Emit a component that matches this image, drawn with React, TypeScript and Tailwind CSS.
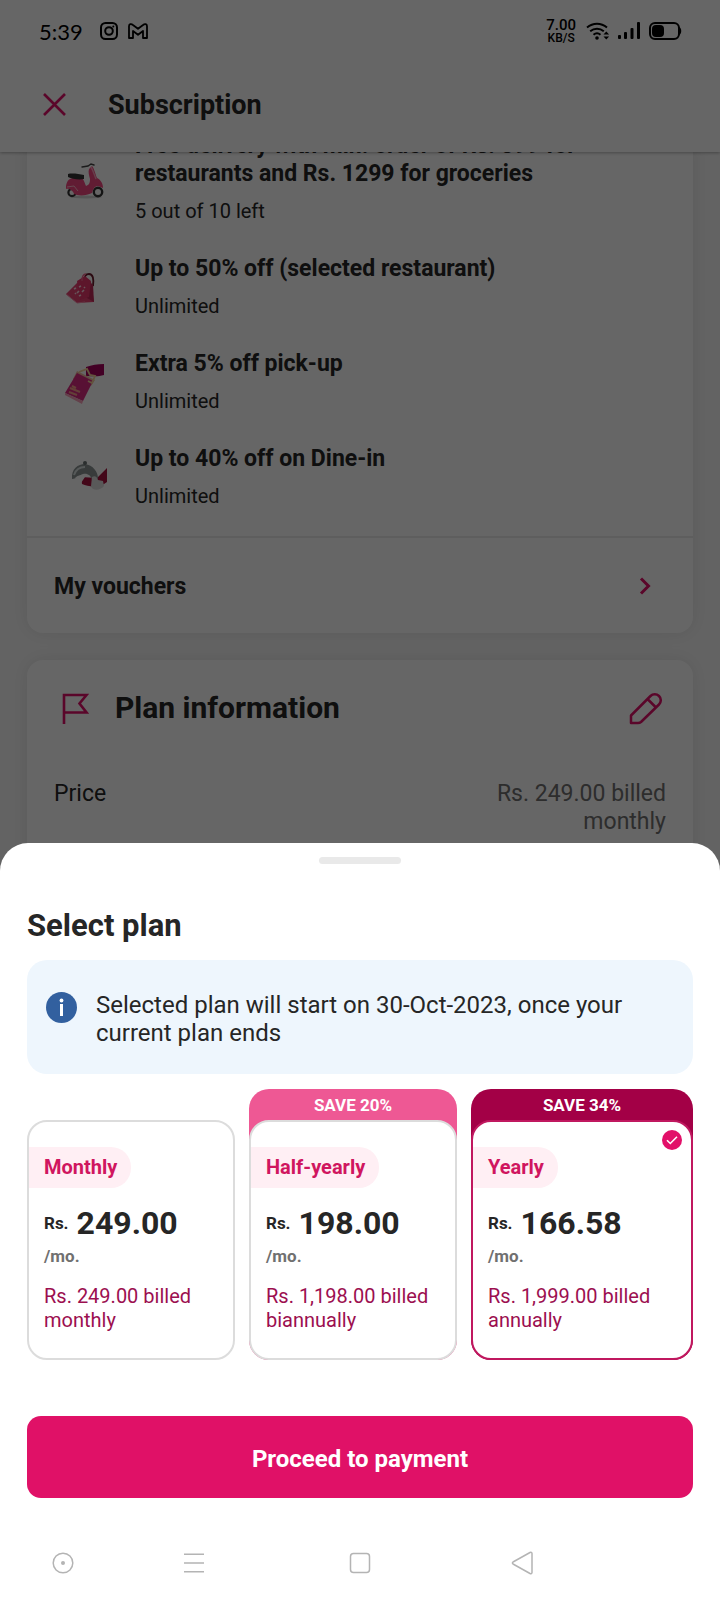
import { useState } from "react";

const benefits = [
  {
    title: "Free delivery with min. order of Rs. 399 for restaurants and Rs. 1299 for groceries",
    note: "5 out of 10 left",
    art: "scooter",
  },
  { title: "Up to 50% off (selected restaurant)", note: "Unlimited", art: "bag" },
  { title: "Extra 5% off pick-up", note: "Unlimited", art: "pickup" },
  { title: "Up to 40% off on Dine-in", note: "Unlimited", art: "dine" },
];

const plans = [
  { id: "monthly", name: "Monthly", price: "249.00", billed: "Rs. 249.00 billed monthly", save: "", wrap: "" },
  {
    id: "half",
    name: "Half-yearly",
    price: "198.00",
    billed: "Rs. 1,198.00 billed biannually",
    save: "SAVE 20%",
    wrap: "bg-[#ee5894]",
  },
  {
    id: "yearly",
    name: "Yearly",
    price: "166.58",
    billed: "Rs. 1,999.00 billed annually",
    save: "SAVE 34%",
    wrap: "bg-[#a30046]",
  },
];

function Art({ kind }: { kind: string }) {
  if (kind === "scooter")
    return (
      <svg width="40" height="40" viewBox="0 0 40 40" fill="none" aria-hidden="true">
        <ellipse cx="21" cy="36" rx="16" ry="1.500" fill="#d4d4d4" />
        <circle cx="7" cy="31.500" r="3.600" fill="#fff" stroke="#333" strokeWidth="2.200" />
        <circle cx="33" cy="31" r="4.200" fill="#fff" stroke="#333" strokeWidth="2.400" />
        <path d="M1 25c1-6 4-8 8-8h8c2 2 3 6 4 8 3-1 4-3 4-7-1-4-2-7-1-10l3-3c2 2 3 7 5 12 4 2 6 6 6 10l-5-2c-4 0-5 4-6 7-6 3-14 3-18 1-1-4-6-6-8-5z" fill="#f2487f" />
        <path d="M26 6c2 3 3 7 5 12" stroke="#ff9fbd" strokeWidth="1.400" />
        <path d="M3 13c4-1 11 0 16 1v4c-5 1-12 0-16-2z" fill="#333" />
        <path d="M17 6l6-1 3-2 3 1" stroke="#444" strokeWidth="1.400" strokeLinecap="round" />
        <path d="M2 26l7-1 4 5" stroke="#ffb3c9" strokeWidth="1" />
      </svg>
    );
  if (kind === "bag")
    return (
      <svg width="40" height="40" viewBox="0 0 40 40" fill="none" aria-hidden="true">
        <path d="M19 13c0-7 2-9 5-9 4 0 5 5 4 12" stroke="#6b1a2c" strokeWidth="1.800" />
        <path d="M14 11L1 24l11 9 17-1-3-20z" fill="#e84474" />
        <path d="M20 7l8 8 1 17-7-4z" fill="#c02a58" />
        <path d="M12 11l8-5 6 5-2 16-9 3z" fill="#e8386c" />
        <path d="M17 11c0-5 2-7 4-7" stroke="#f0648c" strokeWidth="1.400" />
        <path d="M9 19l2-1m1 5l2-2m0-4l2-1m1 6l2-2m-5 6l2-1m-6-2l1 1m8-7l1 1" stroke="#ffd6e2" strokeWidth="1.600" />
        <path d="M1 24l11 9 8-1" stroke="#f58bab" strokeWidth="1" />
      </svg>
    );
  if (kind === "pickup")
    return (
      <svg width="40" height="42" viewBox="0 0 40 42" fill="none" aria-hidden="true">
        <path d="M21 3c6-2 11-3 18-3v11c-6 2-12 1-18 1z" fill="#a8005d" />
        <path d="M12 7l18 9-4 6-18-7z" fill="#f2bfa0" />
        <path d="M12 9l16 8-10 20L0 29z" fill="#dc2b83" />
        <path d="M0 29l18 8-1 3L0 31z" fill="#f7a0b8" />
        <path d="M14 8l8-3 3 6 5 1-3 7-4-2" stroke="#f7d29a" strokeWidth="1.800" />
        <path d="M5 24l10 4m-11 0l8 3m-5-9l4 2" stroke="#f7a08b" strokeWidth="2" />
      </svg>
    );
  return (
    <svg width="44" height="40" viewBox="0 0 44 40" fill="none" aria-hidden="true">
      <path d="M16 17l16 1 10-10v14c-7 6-18 5-25 2z" fill="#a8123f" />
      <path d="M7 19C6 9 13 4 20 4c8 1 13 8 13 14-1 3-4 4-6 2-1-5-5-7-9-6-4 1-6 5-11 5z" fill="#8c9494" />
      <path d="M9 15c2-6 6-8 11-8" stroke="#d8dede" strokeWidth="2" />
      <circle cx="20" cy="3" r="2" fill="#6b7373" />
      <path d="M10 18c2-3 8-4 10-1l-4 6z" fill="#fff" />
      <path d="M27 17c3-2 5 0 6 3l5 1 1 5c-4 5-12 5-13 0z" fill="#dedede" />
    </svg>
  );
}

function StatusBar() {
  return (
    <div className="flex h-[62px] items-center justify-between pr-[38px] pl-[39px] text-black">
      <div className="flex items-center">
        <span className="font-[Lato,sans-serif] text-[22px]">5:39</span>
        <svg className="ml-[17px]" width="18" height="18" viewBox="0 0 18 18" fill="none" stroke="currentColor" strokeWidth="2" aria-hidden="true">
          <rect x="1" y="1" width="16" height="16" rx="4.500" />
          <circle cx="9" cy="9" r="3.800" />
          <circle cx="13.300" cy="4.600" r="1" fill="currentColor" stroke="none" />
        </svg>
        <svg className="ml-[10px]" width="20" height="16" viewBox="0 0 20 16" fill="none" stroke="currentColor" strokeWidth="1.800" strokeLinejoin="round" aria-hidden="true">
          <path d="M1 3.200C1 1 3.200.5 4.600 1.700L10 5.800l5.400-4.100C16.800.5 19 1 19 3.200V15h-4V8l-5 3.800L5 8v7H1z" />
        </svg>
      </div>
      <div className="flex items-center">
        <div className="flex flex-col items-center font-medium">
          <span className="text-[15px] leading-[14px]">7.00</span>
          <span className="text-[12px] leading-[12px]">KB/S</span>
        </div>
        <svg className="ml-[10px]" width="24" height="18" viewBox="0 0 24 18" fill="none" stroke="currentColor" strokeWidth="2" aria-hidden="true">
          <path d="M1 5.500C7 .5 15 .5 21 5.500M4.200 9.300c4-3.400 9.600-3.400 13.600 0M7.500 12.800c2-1.700 5-1.700 7 0" />
          <circle cx="11" cy="16" r="1.800" fill="currentColor" stroke="none" />
          <path d="M17.500 12.500L20.300 9.500l2.800 3zM17.500 14.500l2.800 3 2.800-3z" fill="currentColor" stroke="none" />
        </svg>
        <svg className="ml-[7px]" width="24" height="18" viewBox="0 0 24 18" fill="currentColor" aria-hidden="true">
          <rect x="1" y="13" width="3" height="4" rx="1" />
          <rect x="7" y="10" width="3" height="7" rx="1" />
          <rect x="13.500" y="6" width="3" height="11" rx="1" />
          <rect x="20" y="0" width="3" height="17" rx="1" />
        </svg>
        <svg className="ml-[8px]" width="33" height="18" viewBox="0 0 33 18" fill="none" aria-hidden="true">
          <rect x="1" y="1" width="29" height="16" rx="5" stroke="currentColor" strokeWidth="2" />
          <rect x="3" y="3" width="12" height="12" rx="4" fill="currentColor" />
          <path d="M30 5c3 1 3 7 0 8z" fill="currentColor" />
        </svg>
      </div>
    </div>
  );
}

export default function App() {
  const [selected, setSelected] = useState("yearly");

  return (
    <div className="flex h-screen min-h-[1200px] flex-col overflow-hidden bg-white font-[Roboto,sans-serif] text-[#262626]">
      <div className="relative -mb-8 flex min-h-0 flex-1 flex-col bg-[#f8f8f8]">
        <div className="z-10 bg-white shadow-[0_1px_3px_rgba(0,0,0,0.3)]">
          <StatusBar />
          <header className="flex h-[90px] items-center pb-[5px] pl-[43px]">
            <button aria-label="Close" className="text-[#e21069]">
              <svg width="23" height="23" viewBox="0 0 23 23" fill="none" stroke="currentColor" strokeWidth="2.600" aria-hidden="true">
                <path d="M1 1l21 21M22 1L1 22" />
              </svg>
            </button>
            <h1 className="ml-[42px] text-[27px] leading-8 font-bold">Subscription</h1>
          </header>
        </div>

        <main className="min-h-0 flex-1 overflow-hidden px-[27px]">
          <section className="-mt-5 rounded-2xl bg-white shadow-[0_0_18px_rgba(0,0,0,0.09)]">
            <ul className="flex flex-col gap-[33px] pb-[29px]">
              {benefits.map((b) => (
                <li key={b.title} className="flex items-center pr-24 pl-[38px]">
                  <div className="w-[70px] shrink-0 pt-2">
                    <Art kind={b.art} />
                  </div>
                  <div>
                    <h2 className="text-[23px] leading-7 font-bold">{b.title}</h2>
                    <p className="mt-3 text-[20px] leading-[22px]">{b.note}</p>
                  </div>
                </li>
              ))}
            </ul>
            <button className="flex h-[97px] w-full items-center justify-between border-t-2 border-[#eaeaea] pr-[42px] pl-[27px] text-left">
              <span className="mt-[3px] text-[23px] leading-7 font-bold">My vouchers</span>
              <svg width="12" height="18" viewBox="0 0 12 18" fill="none" stroke="#e21069" strokeWidth="3" aria-hidden="true">
                <path d="M2 1.500L9.500 9 2 16.500" />
              </svg>
            </button>
          </section>

          <section className="mt-[27px] rounded-2xl bg-white pb-10 shadow-[0_0_18px_rgba(0,0,0,0.09)]">
            <div className="flex h-24 items-center pr-[31px] pl-[35px]">
              <svg width="27" height="31" viewBox="0 0 27 31" fill="none" stroke="#e21069" strokeWidth="2.600" aria-hidden="true">
                <path d="M2 31V2h22.500l-7 8.500 7 9H2" />
              </svg>
              <h2 className="ml-[26px] flex-1 text-[30px] leading-9 font-bold">Plan information</h2>
              <button aria-label="Edit plan" className="text-[#e21069]">
                <svg width="33" height="33" viewBox="0 0 33 33" fill="none" stroke="currentColor" strokeWidth="2.500" strokeLinejoin="round" aria-hidden="true">
                  <path d="M2 31v-7.500L21.500 4a6 6 0 0 1 8.500 8.500L12 30c-1 .8-2 1-3 1zM18.500 7l8.500 8.500" />
                </svg>
              </button>
            </div>
            <dl className="flex justify-between px-[27px] pt-6 text-[23px] leading-7">
              <dt>Price</dt>
              <dd className="w-[200px] text-right text-[#707070]">Rs. 249.00 billed monthly</dd>
            </dl>
          </section>
        </main>
        <div className="absolute inset-0 z-20 bg-black/60" />
      </div>

      <div className="z-30 flex flex-col rounded-t-[28px] bg-white">
        <div className="px-[27px] pt-[14px]">
          <div className="mx-auto h-[7px] w-[82px] rounded-sm bg-[#e9e9e9]" />
          <h2 className="mt-11 text-[31px] leading-9 font-bold">Select plan</h2>
          <div className="mt-4 flex rounded-[20px] bg-[#eef6fd] pt-[31px] pr-10 pb-[27px] pl-[19px]">
            <svg className="mt-px shrink-0" width="31" height="31" viewBox="0 0 31 31" aria-hidden="true">
              <circle cx="15.500" cy="15.500" r="15.500" fill="#32609f" />
              <rect x="14" y="12" width="3" height="12" fill="#fff" />
              <circle cx="15.500" cy="8.500" r="1.900" fill="#fff" />
            </svg>
            <p className="ml-[19px] text-[24px] leading-7">
              Selected plan will start on 30-Oct-2023, once your current plan ends
            </p>
          </div>

          <fieldset aria-label="Plans" className="mt-[15px] grid grid-cols-[208fr_208fr_222fr] items-end gap-[14px]">
            {plans.map((p) => {
              const on = selected === p.id;
              return (
                <label key={p.id} className={`relative flex cursor-pointer flex-col rounded-[20px] ${p.wrap}`}>
                  <input
                    type="radio"
                    name="plan"
                    value={p.id}
                    checked={on}
                    onChange={() => setSelected(p.id)}
                    className="absolute inset-0 appearance-none opacity-0"
                  />
                  {p.save && (
                    <span className="flex h-[31px] items-center justify-center text-[17px] leading-5 font-bold text-white">
                      {p.save}
                    </span>
                  )}
                  <span
                    className={`relative flex flex-col items-start rounded-[20px] border-2 bg-white pt-[25px] pb-[26px] ${on ? "border-[#c0185f]" : "border-[#dcdcdc]"}`}
                  >
                    {on && (
                      <svg className="absolute top-[8px] right-[9px]" width="20" height="20" viewBox="0 0 20 20" fill="none" aria-hidden="true">
                        <circle cx="10" cy="10" r="10" fill="#e21069" />
                        <path d="M5 10.300l3.300 3.200L15 6.800" stroke="#fff" strokeWidth="1.600" />
                      </svg>
                    )}
                    <span className="rounded-r-[20px] bg-[#ffeff4] pr-[14px] pl-[15px] text-[20px] leading-[41px] font-bold text-[#d0165f]">
                      {p.name}
                    </span>
                    <span className="mt-[17px] flex items-center pl-[15px] font-bold">
                      <span className="text-[17px] leading-9">Rs.</span>
                      <span className="ml-2 text-[32px] leading-9">{p.price}</span>
                    </span>
                    <span className="mt-[3px] pl-[15px] text-[17px] leading-6 font-bold text-[#707070]">/mo.</span>
                    <span className="mt-4 px-[15px] text-[20px] leading-6 text-[#9c0f50]">{p.billed}</span>
                  </span>
                </label>
              );
            })}
          </fieldset>

          <button className="mt-14 h-[82px] w-full rounded-[14px] bg-[#e01167] pt-1 text-[24px] font-bold text-white">
            Proceed to payment
          </button>
        </div>

        <nav className="mt-[27px] grid h-[75px] grid-cols-[126fr_136fr_196fr_128fr_134fr] items-center text-[#b4b4b4]">
          <button aria-label="Assist" className="flex justify-center">
            <svg width="22" height="22" viewBox="0 0 22 22" fill="none" stroke="currentColor" strokeWidth="1.500" aria-hidden="true">
              <circle cx="11" cy="11" r="9.800" />
              <circle cx="11" cy="11" r="2" fill="currentColor" stroke="none" />
            </svg>
          </button>
          <button aria-label="Recent apps" className="flex justify-center">
            <svg width="22" height="22" viewBox="0 0 22 22" fill="none" stroke="currentColor" strokeWidth="1.500" aria-hidden="true">
              <path d="M1 2.200h20M1 11h20M1 19.800h20" />
            </svg>
          </button>
          <button aria-label="Home" className="flex justify-center">
            <svg width="22" height="22" viewBox="0 0 22 22" fill="none" stroke="currentColor" strokeWidth="1.500" aria-hidden="true">
              <rect x="1.500" y="1.500" width="19" height="19" rx="3" />
            </svg>
          </button>
          <button aria-label="Back" className="flex justify-center">
            <svg width="22" height="24" viewBox="0 0 22 24" fill="none" stroke="currentColor" strokeWidth="1.500" strokeLinejoin="round" aria-hidden="true">
              <path d="M2 11L19 1.500c1-.500 2 0 2 1v19c0 1-1 1.500-2 1L2 13c-.800-.600-.800-1.400 0-2z" />
            </svg>
          </button>
        </nav>
      </div>
    </div>
  );
}
